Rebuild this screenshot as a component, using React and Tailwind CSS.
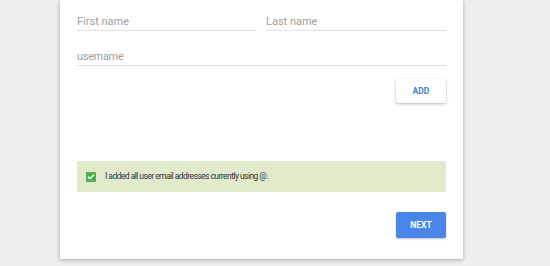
import React from 'react';

export default function App() {
  return (
    <div className="w-[550px] h-[266px] bg-[#eeeeee] overflow-hidden font-['Roboto',sans-serif]">
      <div className="ml-[60px] w-[403px] h-[259px] bg-white shadow-[0_1px_4px_rgba(0,0,0,0.3)] px-[17px] pt-[15px]">
        <div className="flex gap-[9px]">
          <div className="w-[180px] border-b border-[#e0e0e0] pb-[1px] text-[11px] text-[#9e9e9e] leading-[14px]">First name</div>
          <div className="w-[180px] border-b border-[#e0e0e0] pb-[1px] text-[11px] text-[#9e9e9e] leading-[14px]">Last name</div>
        </div>
        <div className="mt-[19px] w-[369px] border-b border-[#e0e0e0] pb-[1px] text-[11px] text-[#9e9e9e] leading-[14px] tracking-[-0.3px]">username</div>
        <div className="flex justify-end w-[369px] mt-[13px]">
          <button className="w-[50px] h-[24px] bg-white rounded-[2px] shadow-[0_1px_3px_rgba(0,0,0,0.3)] text-[8.5px] font-bold text-[#4a7bd0]">ADD</button>
        </div>
        <div className="mt-[58px] w-[369px] h-[31px] bg-[#e1ebcc] flex items-center pl-[9px]">
          <div className="w-[10px] h-[10px] bg-[#4caf50] rounded-[1px] flex items-center justify-center">
            <svg width="8" height="8" viewBox="0 0 24 24" fill="none" stroke="white" strokeWidth="4" strokeLinecap="round" strokeLinejoin="round"><path d="M4 12l5 5L20 6" /></svg>
          </div>
          <span className="ml-[9px] text-[8.5px] text-[#333333] tracking-[-0.55px]">I added all user email addresses currently using @.</span>
        </div>
        <div className="flex justify-end w-[369px] mt-[20px]">
          <button className="w-[50px] h-[26px] bg-[#4a86e8] rounded-[2px] shadow-[0_1px_2px_rgba(0,0,0,0.25)] text-[8.5px] font-bold text-white">NEXT</button>
        </div>
      </div>
    </div>
  );
}
